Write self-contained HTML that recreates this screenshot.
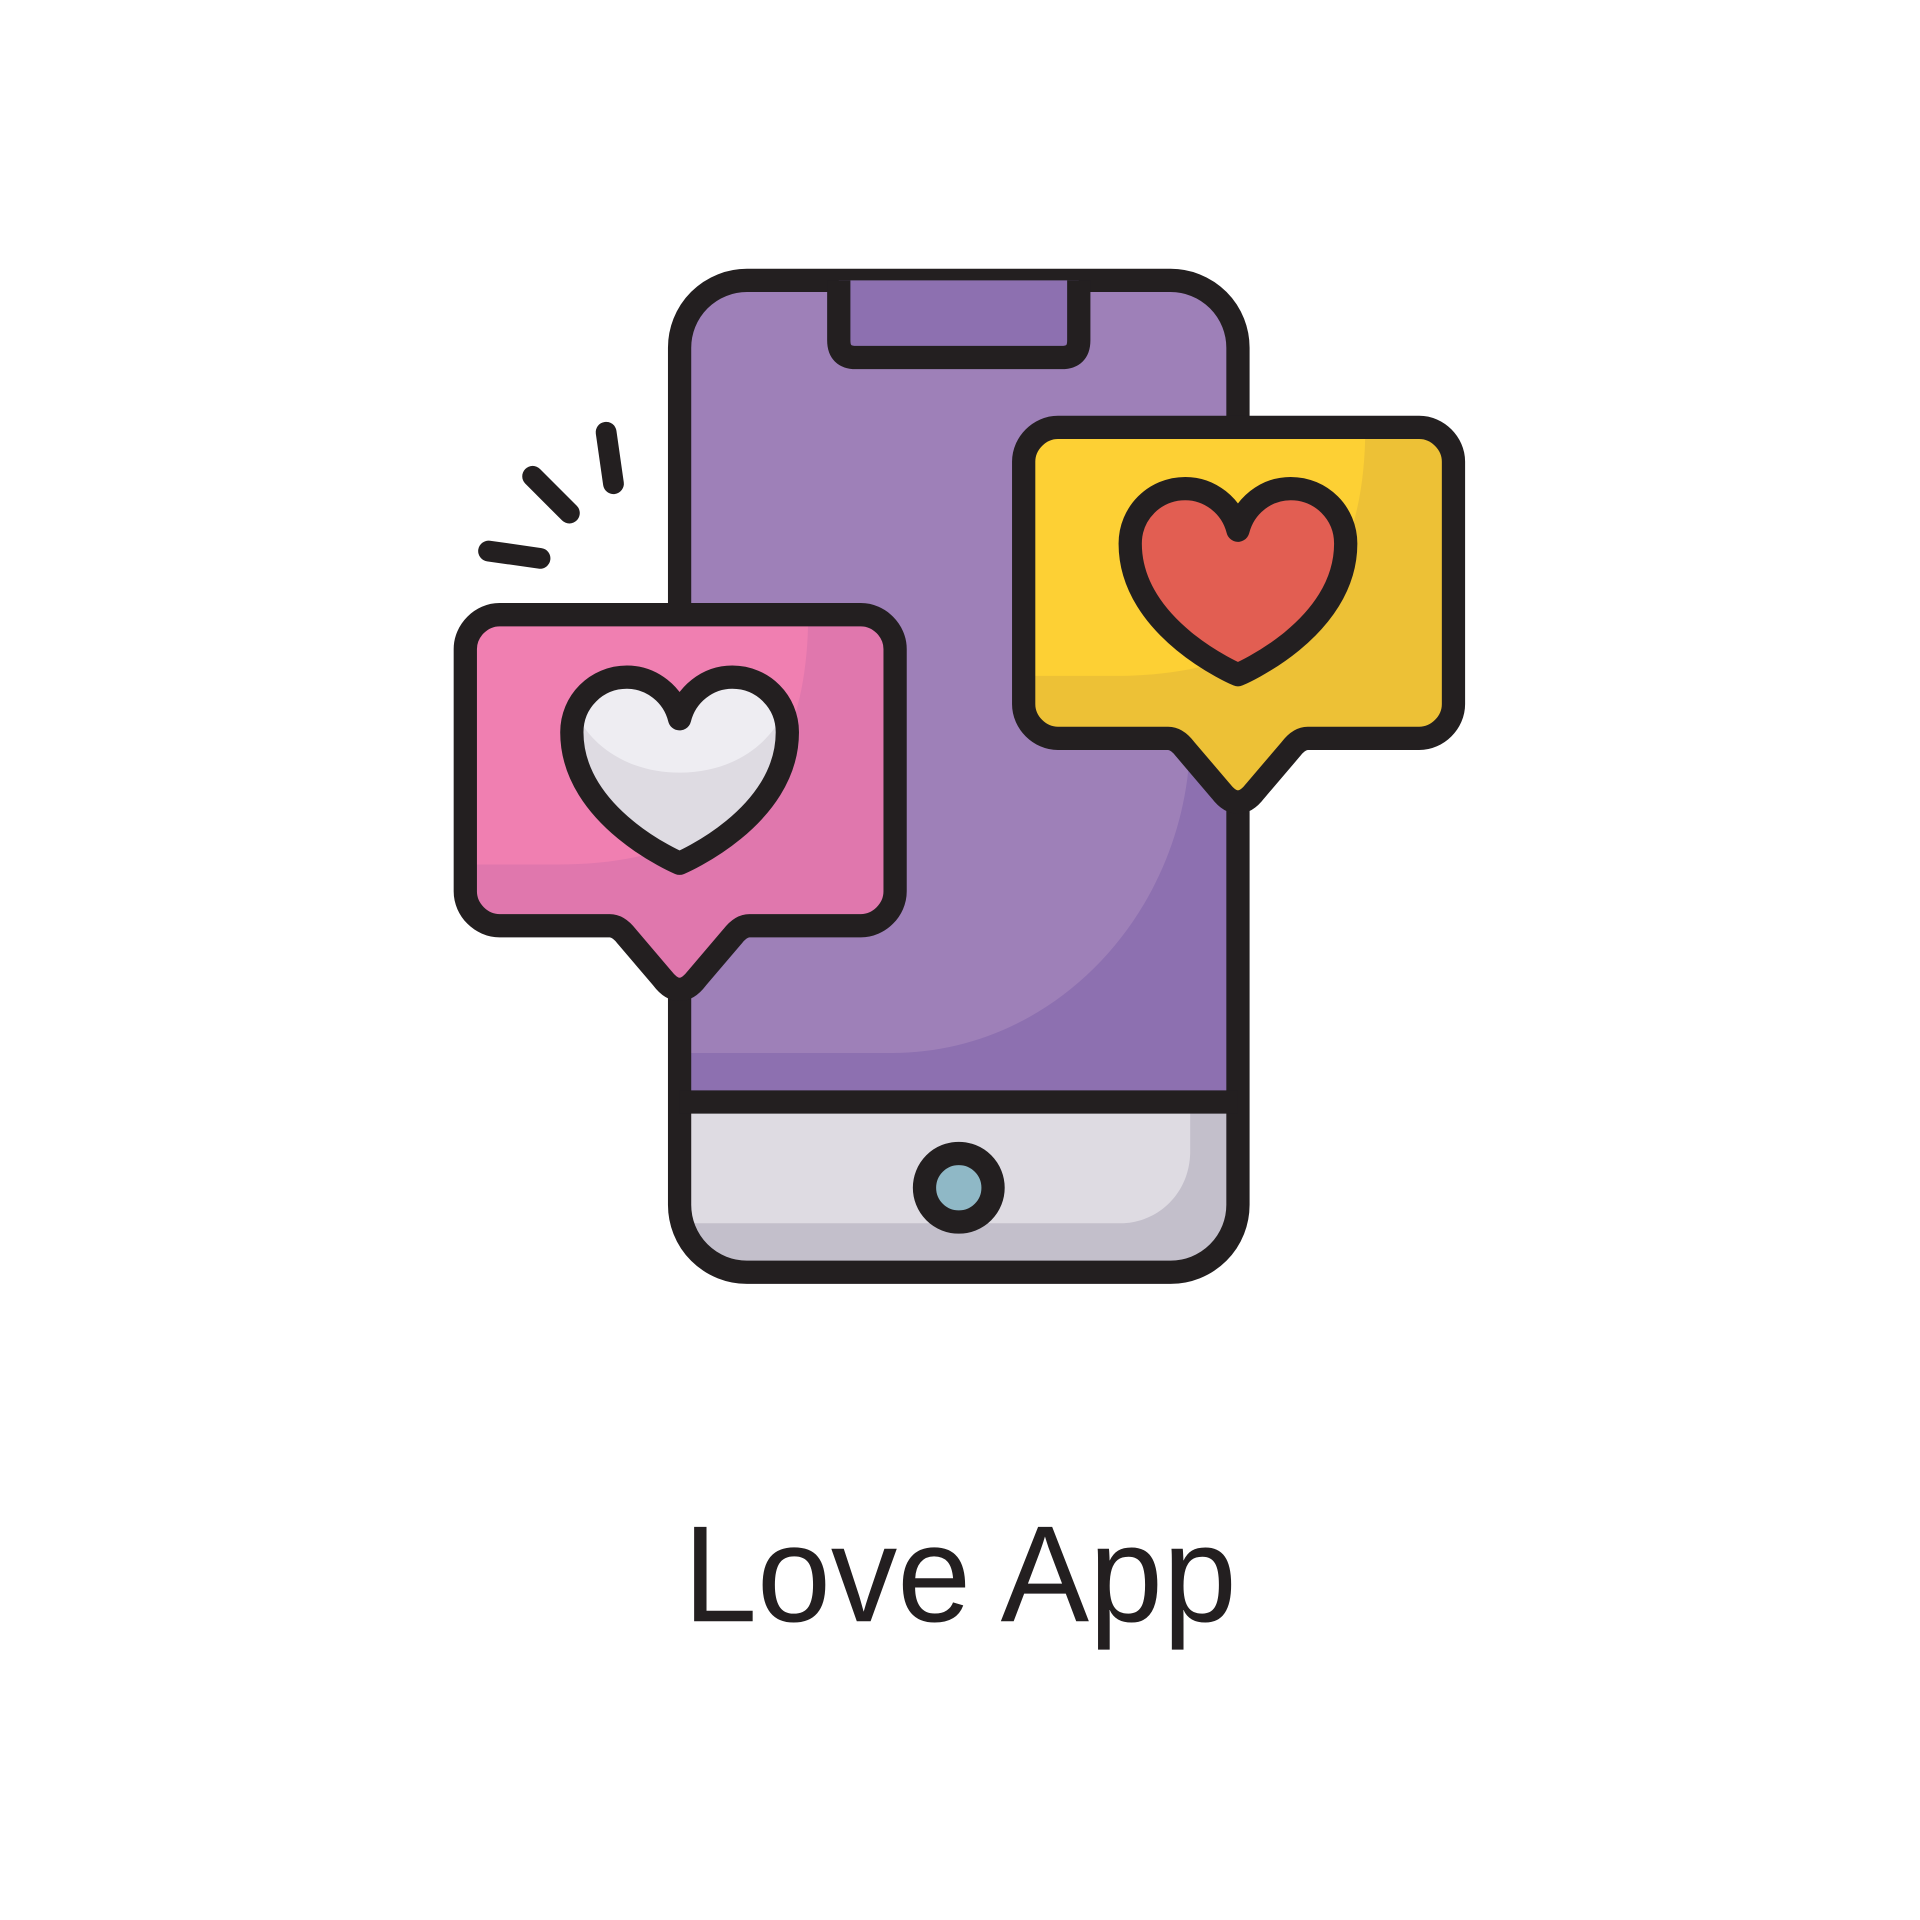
<!DOCTYPE html>
<html><head><meta charset="utf-8"><style>html,body{margin:0;padding:0;background:#fff}svg{display:block}</style></head>
<body>
<svg width="1920" height="1920" viewBox="0 0 1568 1568" xmlns="http://www.w3.org/2000/svg">
<defs><clipPath id="ph"><rect x="555" y="229" width="456" height="810" rx="55"/></clipPath>
<clipPath id="rb"><path d="M1011 655 C1005 655 1000 650 997 646 L968 612 C965 608 960 603 954 603 H864 C849 603 836 590 836 575 V377 C836 362 849 349 864 349 H1159 C1174 349 1187 362 1187 377 V575 C1187 590 1174 603 1159 603 H1068 C1062 603 1057 608 1054 612 L1025 646 C1022 650 1017 655 1011 655 Z"/></clipPath>
<clipPath id="lb"><path d="M555 808 C549 808 544 803 541 799 L512 765 C509 761 504 756 498 756 H408 C393 756 380 743 380 728 V530 C380 515 393 502 408 502 H703 C718 502 731 515 731 530 V728 C731 743 718 756 703 756 H612 C606 756 601 761 598 765 L569 799 C566 803 561 808 555 808 Z"/></clipPath></defs>
<g clip-path="url(#ph)">
<rect x="555" y="229" width="456" height="810" fill="#8d70b0"/>
<path d="M555 229 H1011 V560 H972 V600 C972 740 865 860 728 860 H555 Z" fill="#9e80b8"/>
<rect x="555" y="900" width="456" height="139" fill="#c3bfcb"/>
<path d="M555 900 H972 V940 C972 975 945 999 915 999 H555 Z" fill="#dedbe2"/>
</g>
<rect x="555" y="229" width="456" height="810" rx="55" fill="none" stroke="#231f20" stroke-width="19"/>
<line x1="555" y1="900" x2="1011" y2="900" stroke="#231f20" stroke-width="19"/>
<path d="M685 229 V278 Q685 292 699 292 H867 Q881 292 881 278 V229" fill="#8d70b0" stroke="#231f20" stroke-width="19" stroke-linejoin="round"/>
<circle cx="783" cy="970" r="28" fill="#8fb8c6" stroke="#231f20" stroke-width="19"/>
<!-- right bubble -->
<g clip-path="url(#rb)"><rect x="830" y="340" width="365" height="330" fill="#edc136"/>
<path d="M836 349 H1115 C1115 480 1050 552 910 552 H836 Z" fill="#fdd034"/></g>
<path d="M1011 655 C1005 655 1000 650 997 646 L968 612 C965 608 960 603 954 603 H864 C849 603 836 590 836 575 V377 C836 362 849 349 864 349 H1159 C1174 349 1187 362 1187 377 V575 C1187 590 1174 603 1159 603 H1068 C1062 603 1057 608 1054 612 L1025 646 C1022 650 1017 655 1011 655 Z" fill="none" stroke="#231f20" stroke-width="19" stroke-linejoin="round"/>
<path d="M1011 433 c-5 -20 -23 -34 -43 -34 c-25 0 -45 20 -45 45 c0 70 88 107 88 107 c0 0 88 -37 88 -107 c0 -25 -20 -45 -45 -45 c-20 0 -38 14 -43 34 z" fill="#e25e52" stroke="#231f20" stroke-width="19" stroke-linejoin="round"/>
<!-- left bubble -->
<g clip-path="url(#lb)"><rect x="370" y="495" width="370" height="330" fill="#e077ad"/>
<path d="M380 502 H660 C660 633 595 706 455 706 H380 Z" fill="#f07fb1"/></g>
<path d="M555 808 C549 808 544 803 541 799 L512 765 C509 761 504 756 498 756 H408 C393 756 380 743 380 728 V530 C380 515 393 502 408 502 H703 C718 502 731 515 731 530 V728 C731 743 718 756 703 756 H612 C606 756 601 761 598 765 L569 799 C566 803 561 808 555 808 Z" fill="none" stroke="#231f20" stroke-width="19" stroke-linejoin="round"/>
<path d="M555 587 c-5 -20 -23 -34 -43 -34 c-25 0 -45 20 -45 45 c0 70 88 107 88 107 c0 0 88 -37 88 -107 c0 -25 -20 -45 -45 -45 c-20 0 -38 14 -43 34 z" fill="#dedbe2"/>
<path d="M555 587 c-5 -20 -23 -34 -43 -34 c-22 0 -38 12 -42 28 c10 25 40 50 85 50 c45 0 75 -25 85 -50 c-4 -16 -20 -28 -42 -28 c-20 0 -38 14 -43 34 z" fill="#eeedf2"/>
<path d="M555 587 c-5 -20 -23 -34 -43 -34 c-25 0 -45 20 -45 45 c0 70 88 107 88 107 c0 0 88 -37 88 -107 c0 -25 -20 -45 -45 -45 c-20 0 -38 14 -43 34 z" fill="none" stroke="#231f20" stroke-width="19" stroke-linejoin="round"/>
<g stroke="#231f20" stroke-width="17" stroke-linecap="round">
<line x1="495" y1="353" x2="501" y2="395"/><line x1="435" y1="389" x2="465" y2="419"/><line x1="399" y1="450" x2="441" y2="456"/></g>
<text x="558" y="1324" font-family="Liberation Sans, sans-serif" font-size="112" fill="#231f20" textLength="452" lengthAdjust="spacingAndGlyphs">Love App</text>
</svg>
</body></html>
